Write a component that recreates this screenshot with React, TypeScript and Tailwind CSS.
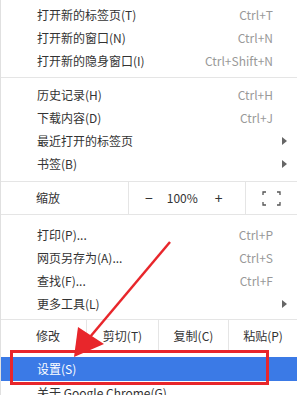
import React from "react";

const font = { fontFamily: '"Noto Sans CJK SC", "Noto Sans", sans-serif' };

function Item({ label, shortcut, arrow }: { label: string; shortcut?: string; arrow?: boolean }) {
  return (
    <div className="flex h-[23px] items-center pl-[36px] pr-[24px] text-[12px] text-[#333]">
      <span className="flex-1">{label}</span>
      {shortcut && <span className="text-[#999]">{shortcut}</span>}
      {arrow && (
        <svg width="5" height="8" viewBox="0 0 5 8" className="mr-[-14px]">
          <path d="M0 0 L5 4 L0 8 Z" fill="#666" />
        </svg>
      )}
    </div>
  );
}

function Sep() {
  return <div className="my-[5px] h-px bg-[#e5e5e5]" />;
}

export default function App() {
  return (
    <div className="relative h-[395px] w-[299px] overflow-hidden bg-white" style={font}>
      <div className="h-full w-[297px] border-l border-[#e0e0e0] pt-[3px]">
        <Item label="打开新的标签页(T)" shortcut="Ctrl+T" />
        <Item label="打开新的窗口(N)" shortcut="Ctrl+N" />
        <Item label="打开新的隐身窗口(I)" shortcut="Ctrl+Shift+N" />
        <Sep />
        <Item label="历史记录(H)" shortcut="Ctrl+H" />
        <Item label="下载内容(D)" shortcut="Ctrl+J" />
        <Item label="最近打开的标签页" arrow />
        <Item label="书签(B)" arrow />
        <div className="mt-[6px] flex h-[34px] border-y border-[#e5e5e5] text-[12px] text-[#333]">
          <div className="flex w-[127px] items-center pl-[35px]">缩放</div>
          <div className="flex w-[117px] items-center border-l border-[#e5e5e5]">
            <span className="ml-[16px] text-[14px]">−</span>
            <span className="ml-[14px]">100%</span>
            <span className="ml-[17px] text-[14px]">+</span>
          </div>
          <div className="flex flex-1 items-center justify-center border-l border-[#e5e5e5]">
            <svg width="19" height="15" viewBox="0 0 19 15" fill="none" stroke="#555" strokeWidth="1.3">
              <path d="M1 4 V1 H4 M15 1 H18 V4 M18 11 V14 H15 M4 14 H1 V11" />
            </svg>
          </div>
        </div>
        <div className="h-[8px]" />
        <Item label="打印(P)..." shortcut="Ctrl+P" />
        <Item label="网页另存为(A)..." shortcut="Ctrl+S" />
        <Item label="查找(F)..." shortcut="Ctrl+F" />
        <Item label="更多工具(L)" arrow />
        <div className="mt-[4px] flex h-[33px] border-t border-[#e5e5e5] text-[12px] text-[#333]">
          <div className="flex w-[85px] items-center pl-[35px]">修改</div>
          <div className="flex w-[72px] items-center justify-center border-l border-[#e5e5e5]">剪切(T)</div>
          <div className="flex w-[70px] items-center justify-center border-l border-[#e5e5e5]">复制(C)</div>
          <div className="flex flex-1 items-center justify-center border-l border-[#e5e5e5]">粘贴(P)</div>
        </div>
        <div className="mt-[5px] flex h-[24px] items-center bg-[#3b7ae6] pl-[36px] text-[12px] text-white">设置(S)</div>
        <div className="flex h-[23px] items-center pl-[36px] text-[12px] text-[#333]">关于 Google Chrome(G)</div>
      </div>
      <div className="pointer-events-none absolute left-[10px] top-[350px] h-[35px] w-[259px] border-[3px] border-[#e8262b]" />
      <svg className="pointer-events-none absolute left-0 top-0" width="299" height="395" viewBox="0 0 299 395">
        <line x1="170" y1="242" x2="90" y2="337" stroke="#e8262b" strokeWidth="2.5" />
        <path d="M74 357 L78 327 L104 344 Z" fill="#e8262b" />
      </svg>
    </div>
  );
}
